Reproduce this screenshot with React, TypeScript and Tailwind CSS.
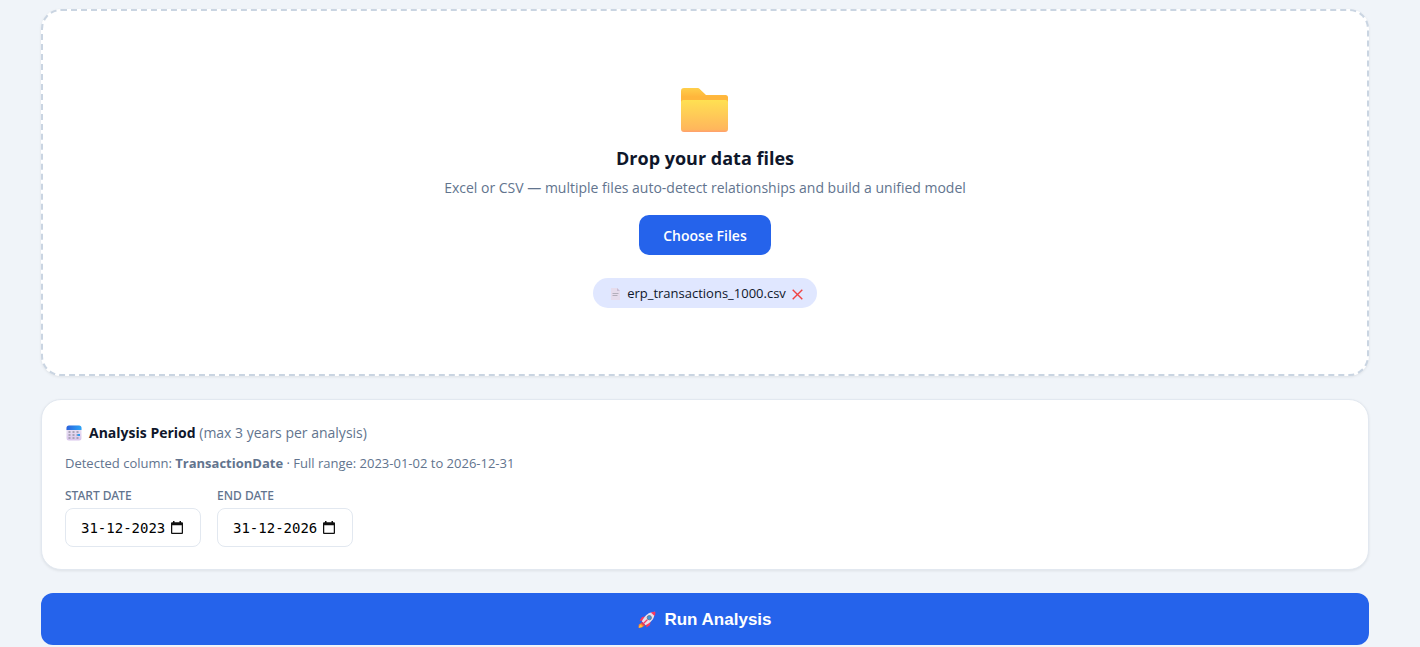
import { useState } from 'react';

function FolderIcon() {
  return (
    <svg width="48" height="46" viewBox="0 0 48 46" aria-hidden="true">
      <defs>
        <linearGradient id="folderBack" x1="0" y1="0" x2="0" y2="1">
          <stop offset="0" stopColor="#ffcf4a" />
          <stop offset="0.3" stopColor="#ffb63c" />
        </linearGradient>
        <linearGradient id="folderFront" x1="0" y1="0" x2="0" y2="1">
          <stop offset="0" stopColor="#ffe052" />
          <stop offset="0.92" stopColor="#ffb65c" />
          <stop offset="1" stopColor="#ff9f70" />
        </linearGradient>
      </defs>
      <path d="M0 4a3 3 0 0 1 3-3h13c1.400 0 2.300.500 3.200 1.400L25 8h19.500A2.500 2.500 0 0 1 47 10.500V30H0z" fill="url(#folderBack)" />
      <path d="M0 15.500A2.500 2.500 0 0 1 2.500 13h42a2.500 2.500 0 0 1 2.500 2.500V42a3 3 0 0 1-3 3H3a3 3 0 0 1-3-3z" fill="url(#folderFront)" />
    </svg>
  );
}

function FileIcon() {
  return (
    <svg width="11" height="14" viewBox="0 0 11 14" aria-hidden="true">
      <path d="M1 1h6l3 3v9H1z" fill="#e6dcec" />
      <path d="M7 1v3h3z" fill="#c9bdd3" />
      <path d="M2.500 6.500h6M2.500 8.500h5" stroke="#b3aebb" strokeWidth="1.200" />
    </svg>
  );
}

function CalendarIcon() {
  return (
    <svg width="17" height="16" viewBox="-1 0 17 16" aria-hidden="true">
      <defs>
        <linearGradient id="calTop" x1="0" y1="0" x2="1" y2="0">
          <stop offset="0" stopColor="#2b62dc" />
          <stop offset="1" stopColor="#2ba5f7" />
        </linearGradient>
        <linearGradient id="calBody" x1="0" y1="0" x2="0" y2="1">
          <stop offset="0" stopColor="#eee9f5" />
          <stop offset="1" stopColor="#d9c5ec" />
        </linearGradient>
      </defs>
      <rect x="0.500" y="0.500" width="15" height="15" rx="2.500" fill="url(#calBody)" />
      <path d="M.5 5V3A2.500 2.500 0 0 1 3 .5h10A2.500 2.500 0 0 1 15.500 3v2z" fill="url(#calTop)" />
      <path d="M3.500 6v8M7.500 6v8M11.500 6v8" stroke="#aaa4b8" strokeWidth="2" strokeDasharray="2 1" />
      <path d="M11.500 9h2.500v2h-2.500z" fill="#2b9df2" />
    </svg>
  );
}

function PickerIcon() {
  return (
    <svg width="12" height="14" viewBox="0 0 12 14" aria-hidden="true">
      <path d="M2 0h1.500v1.250h5V0H10v1.250h1a1 1 0 0 1 1 1V12a1 1 0 0 1-1 1H1a1 1 0 0 1-1-1V2.250a1 1 0 0 1 1-1h1zM1.250 4.250v7.500h9.500v-7.500z" fill="#111" fillRule="evenodd" />
    </svg>
  );
}

function RocketIcon() {
  return (
    <svg width="18" height="18" viewBox="0 0 18 18" aria-hidden="true">
      <path d="M4.500 11.500 7 14l-3 2.500-3.500.5.300-3.500z" fill="#ff822d" />
      <path d="M2.500 13.500 4.500 15.500 2 16.500l-1 .2.300-1.500z" fill="#ffc947" />
      <path d="M7.500 5.500 4 6 1.500 9.500l4 .5zM12.500 10.500l-.5 3.500L8.500 16.500l-.5-4z" fill="#f8385f" />
      <path d="M12 1.800 17 .8l-1 5C15 9.500 11 12.500 7.500 14.200L3.800 10.500C5.500 7 8.500 3 12 1.800z" fill="#e5dfed" />
      <path d="M12.800 1.500C14.500.8 15.800.5 17.300.7c.2 1.500 0 2.800-.7 4.300z" fill="#f8385f" />
      <path d="M3.800 10.500 7.500 14.200 5.800 14.800 3.200 12.200z" fill="#d63861" />
      <path d="M9 9 5.500 12.500" stroke="#f8385f" strokeWidth="1.200" strokeLinecap="round" />
      <circle cx="11.300" cy="6.700" r="2.100" fill="#3999dc" stroke="#6d7895" strokeWidth="1" />
    </svg>
  );
}

interface DateFieldProps {
  id: string;
  label: string;
  value: string;
  onChange: (value: string) => void;
}

function DateField({ id, label, value, onChange }: DateFieldProps) {
  return (
    <div>
      <label htmlFor={id} className="block font-['Noto_Sans',sans-serif] text-xs leading-4 font-medium text-slate-500 uppercase mb-1">
        {label}
      </label>
      <div className="flex items-center w-[136px] h-[39px] pl-[15px] rounded-lg border border-slate-200 bg-white">
        <input
          id={id}
          type="text"
          value={value}
          onChange={(e) => onChange(e.target.value)}
          className="w-[90px] font-['DejaVu_Sans_Mono',monospace] text-sm text-black outline-none"
        />
        <button type="button" aria-label={`Pick ${label.toLowerCase()}`}>
          <PickerIcon />
        </button>
      </div>
    </div>
  );
}

export default function App() {
  const [files, setFiles] = useState(['erp_transactions_1000.csv']);
  const [startDate, setStartDate] = useState('31-12-2023');
  const [endDate, setEndDate] = useState('31-12-2026');

  return (
    <main className="min-h-screen bg-[#f0f4f9] pt-[9px] pb-0.5 pl-[41px] pr-[51px] font-['Open_Sans','Noto_Sans',sans-serif] text-slate-900">
      <section className="flex flex-col items-center rounded-[20px] border-2 border-dashed border-slate-300 bg-white pt-[76px] pb-[66px] shadow-[0_1px_3px_rgba(0,0,0,0.08)]">
        <FolderIcon />
        <h2 className="mt-[13px] text-lg leading-6 font-bold">Drop your data files</h2>
        <p className="mt-1.5 text-sm leading-6 text-slate-500">
          Excel or CSV — multiple files auto-detect relationships and build a unified model
        </p>
        <button type="button" className="mt-[15px] h-10 w-[132px] rounded-[10px] bg-[#2563eb] pt-0.5 text-sm font-semibold text-white">
          Choose Files
        </button>
        <ul className="mt-[23px] flex gap-2">
          {files.map((file) => (
            <li key={file} className="flex h-[30px] items-center rounded-full bg-indigo-100 pt-0.5 pl-[17px] pr-[14px] text-[13px]">
              <FileIcon />
              <span className="ml-1.5">{file}</span>
              <button
                type="button"
                aria-label={`Remove ${file}`}
                onClick={() => setFiles(files.filter((f) => f !== file))}
                className="ml-1.5"
              >
                <svg width="11" height="11" viewBox="0 0 11 11" aria-hidden="true">
                  <path d="M.7.700l9.600 9.600M10.300.700.7 10.300" stroke="#ef4444" strokeWidth="1.400" />
                </svg>
              </button>
            </li>
          ))}
        </ul>
      </section>

      <section className="mt-[23px] rounded-[20px] border border-slate-200 bg-white px-[23px] pt-[21px] pb-[22px] shadow-[0_1px_3px_rgba(0,0,0,0.08)]">
        <h3 className="flex items-center text-sm leading-6 font-bold">
          <CalendarIcon />
          <span className="ml-[7px]">
            Analysis Period <span className="font-normal text-slate-500">(max 3 years per analysis)</span>
          </span>
        </h3>
        <p className="mt-2 text-[13px] leading-5 text-slate-500">
          Detected column: <strong>TransactionDate</strong> · Full range: 2023-01-02 to 2026-12-31
        </p>
        <div className="mt-[15px] flex gap-4">
          <DateField id="start" label="Start date" value={startDate} onChange={setStartDate} />
          <DateField id="end" label="End date" value={endDate} onChange={setEndDate} />
        </div>
      </section>

      <button
        type="button"
        className="mt-[23px] flex h-[52px] w-full items-center justify-center gap-2 rounded-xl bg-[#2563eb] pt-px font-['Liberation_Sans',sans-serif] text-[17px] font-bold text-white"
      >
        <RocketIcon />
        Run Analysis
      </button>
    </main>
  );
}
